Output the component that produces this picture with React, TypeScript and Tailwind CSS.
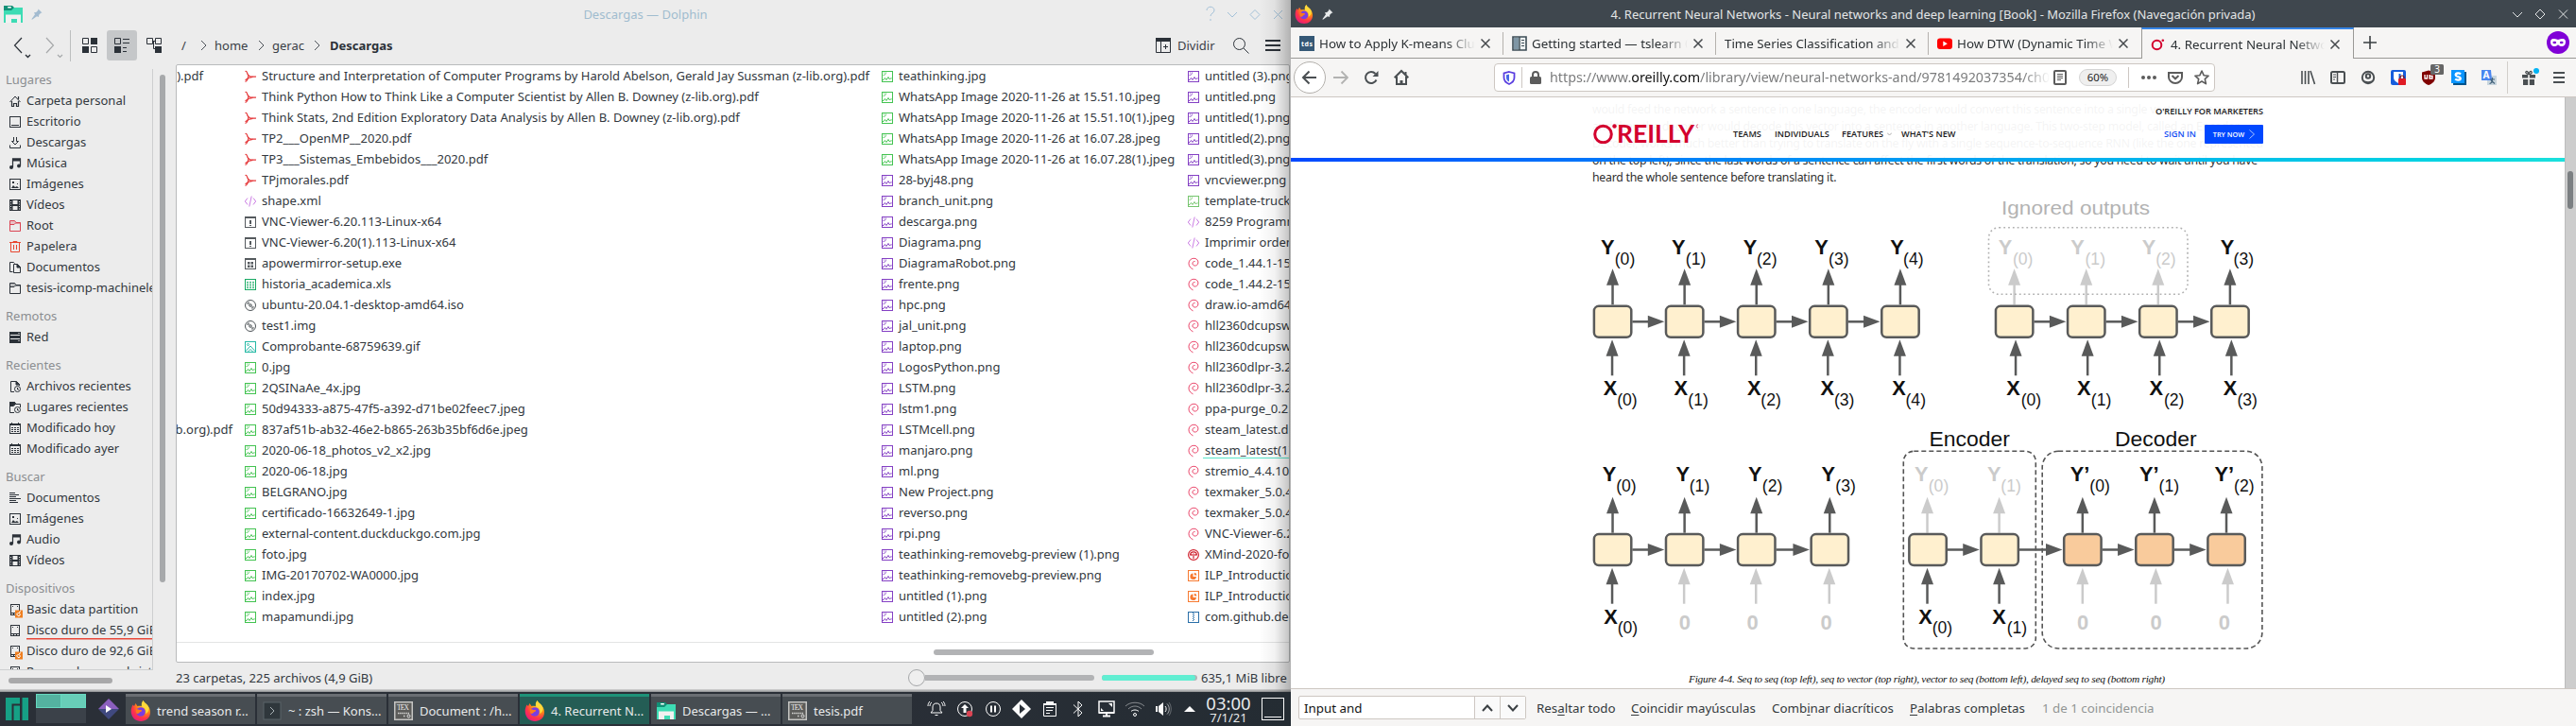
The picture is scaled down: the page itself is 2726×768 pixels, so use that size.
import React from "react";

const INK = "#2b3138";

/* ---------- small icons (16 unit grid) ---------- */
type IconName =
  | "home" | "desktop" | "download" | "music" | "image" | "video" | "folderRed" | "trash"
  | "docs" | "folder" | "network" | "recentFile" | "recentFolder" | "calendar" | "lines"
  | "diskLink" | "disk" | "pdf" | "xml" | "bin" | "exe" | "xls" | "iso" | "gif" | "jpg"
  | "png" | "svgfile" | "deb" | "redhat" | "ppt" | "zip";

function pic(color: string) {
  return (
    <g fill="none" stroke={color}>
      <rect x="2.500" y="2.500" width="11" height="11" />
      <path d="M3 11.500h1l1.500-2 1.500 2 2-3 1.500 2.500 1.500-1.500 1 1" />
      <path d="M3.500 6.500c2 0 3-1 3-3M4 4h1" opacity=".85" />
    </g>
  );
}

const folderShape = (c: string) => (
  <>
    <path d="M2.500 13.500v-11h5l1.500 2h4.500v9z" fill="none" stroke={c} />
    <path d="M3 2.500h4.500l1.500 2L7 6.500H3z" fill={c} opacity=".25" />
    <path d="M3 6.500h4l1.500-1.500H14" stroke={c} fill="none" />
  </>
);

const diskShape = (
  <g fill="none" stroke={INK}>
    <rect x="3.500" y="2.500" width="9" height="11" />
    <path d="M5 4.500h1M10 4.500h1M3.500 11.500h9M6.500 13v-1.500M9.500 13v-1.500" />
  </g>
);

const ICONS: Record<IconName, React.ReactNode> = {
  home: (
    <g fill="none" stroke={INK}>
      <path d="M2.500 9L8 3l5.500 6" />
      <path d="M4.500 8v5.500h2v-3h3v3h2V8M11.500 3v3" strokeWidth="1.200" />
    </g>
  ),
  desktop: (
    <g fill="none" stroke={INK}>
      <rect x="2.500" y="2.500" width="11" height="11" />
      <path d="M4 11.500h8" />
    </g>
  ),
  download: (
    <g fill="none" stroke={INK}>
      <path d="M6.500 2v4.500H4.500L8 10l3.500-3.500h-2V2M2.500 10.500v3h11v-3" />
    </g>
  ),
  music: (
    <g>
      <path d="M5.500 12V3h8v7.500" fill="none" stroke={INK} strokeWidth="1.200" />
      <path d="M5 2.500h9v3H5z" fill={INK} />
      <circle cx="4" cy="12" r="2" fill={INK} />
      <circle cx="12" cy="10.500" r="2" fill={INK} />
    </g>
  ),
  image: (
    <g>
      <rect x="2.500" y="2.500" width="11" height="11" fill="none" stroke={INK} />
      <path d="M4 12l2-3 2 2 2-1 2 2zM5 5h2v2H5zM10 7h1v1h-1z" fill={INK} />
    </g>
  ),
  video: (
    <g>
      <path d="M2 2h12v12H2z" fill={INK} />
      <path d="M5.500 3h5v4h-5zM5.500 9h5v4h-5z" fill="#ececec" />
      <path d="M3 4h1v1H3zM3 6.500h1v1H3zM3 9h1v1H3zM3 11.500h1v1H3zM12 4h1v1h-1zM12 6.500h1v1h-1zM12 9h1v1h-1zM12 11.500h1v1h-1z" fill="#ececec" />
    </g>
  ),
  folderRed: folderShape("#da4453"),
  folder: folderShape(INK),
  trash: (
    <g fill="none" stroke="#e8462f">
      <path d="M3.500 4v9.500h9V4M2 3.500h12M6 3V2.500h4V3M6.500 6v5M9.500 6v5" />
    </g>
  ),
  docs: (
    <g fill="none" stroke={INK}>
      <path d="M5.500 12.500h-3v-10h4l1 1" />
      <path d="M6.500 4.500h4l3 3v6h-7z" />
      <path d="M10 4.500v3.500h3.500z" fill={INK} />
    </g>
  ),
  network: (
    <g>
      <path d="M2 2h12v12H2z" fill={INK} />
      <path d="M3 5.500h10M3 9.500h10" stroke="#ececec" />
      <path d="M11 3.500h2M11 11.500h2" stroke="#ececec" strokeWidth=".6" />
    </g>
  ),
  recentFile: (
    <g fill="none" stroke={INK}>
      <path d="M7 13.500H3.500v-11h6l3 3V7" />
      <path d="M9 2.500V6h3.500z" fill={INK} />
      <circle cx="10.500" cy="10.500" r="3" />
      <path d="M10.500 9v2H12" />
    </g>
  ),
  recentFolder: (
    <g fill="none" stroke={INK}>
      <path d="M7 13.500H2.500v-11h5l1 2h5V8" />
      <path d="M2.500 2.500h5l1 2L6 6.500H2.500z" fill={INK} />
      <circle cx="10.500" cy="10.500" r="3" />
      <path d="M10.500 9v2H12" />
    </g>
  ),
  calendar: (
    <g>
      <rect x="2.500" y="3.500" width="11" height="10" fill="none" stroke={INK} />
      <path d="M2 3h12v2H2zM4 2h1v2H4zM11 2h1v2h-1z" fill={INK} />
      <path d="M4 7.500h8M4 9.500h8M4 11.500h8" stroke={INK} strokeDasharray="2 1" />
    </g>
  ),
  lines: <path d="M2 2.500h6M2 4.500h10M2 6.500h7M2 8.500h12M2 10.500h7M2 12.500h9" stroke={INK} fill="none" />,
  disk: diskShape,
  diskLink: (
    <g>
      {diskShape}
      <rect x="8" y="8.500" width="8" height="8" fill="#ef8022" />
      <path d="M9.500 13l2-2 2 2-1.500 2zM12 11l2-1.500" stroke="#fff" fill="none" />
    </g>
  ),
  pdf: (
    <g fill="none" stroke="#e5393b" strokeWidth="1.200">
      <path d="M2.500 2.500c1.500-.5 2 1 2.300 2.500.4 1.500 1.500 2.500 3.200 3 1.800.4 3.500-.3 6 .2" />
      <path d="M2.500 13.500c2-.5 3-3.500 3.500-7" />
      <path d="M2.500 12c2-2 5-3.500 8-3.700" opacity=".9" />
    </g>
  ),
  xml: (
    <path d="M5 4.500L2.300 8 5 11.500M11 4.500L13.700 8 11 11.500M9.200 2.500l-2.400 11" fill="none" stroke="#cb7de4" />
  ),
  bin: (
    <g fill="none" stroke="#555a5e">
      <rect x="2.500" y="2.500" width="11" height="11" />
      <path d="M2 3.500h12" />
      <path d="M8 6v4M8 11v1" strokeWidth="2" />
    </g>
  ),
  exe: (
    <g fill="none" stroke="#555a5e">
      <rect x="2.500" y="2.500" width="11" height="11" />
      <path d="M2 3.500h12" />
      <path d="M5 6h2.500v2.500H5zM8.500 6H11v2.500H8.500zM5 9.500h2.500V12H5zM8.500 9.500H11V12H8.500z" fill="#555a5e" stroke="none" />
    </g>
  ),
  xls: (
    <g fill="none" stroke="#18a963">
      <rect x="2.500" y="2.500" width="11" height="11" />
      <path d="M4 5.500h8M4 7.500h8M4 9.500h8M4 11.500h8" strokeDasharray="2 1" />
    </g>
  ),
  iso: (
    <g fill="none" stroke="#50565a">
      <circle cx="8" cy="8" r="5.500" />
      <circle cx="8" cy="8" r="1.300" />
      <path d="M4.500 6.500c.3-1 1-1.800 2-2.200M5.500 7c.3-.8.800-1.200 1.500-1.500M11.500 9.500c-.3 1-1 1.800-2 2.200M10.500 9c-.3.800-.8 1.200-1.500 1.500" />
    </g>
  ),
  gif: (
    <g fill="none" stroke="#26b9a5">
      <rect x="2.500" y="2.500" width="11" height="11" />
      <path d="M3 12.500l5-5.500 5 5.500" />
      <path d="M5.500 13l2.500-2.500 2.500 2.500" />
      <circle cx="5.500" cy="5.500" r="1" />
    </g>
  ),
  jpg: pic("#43c351"),
  png: pic("#8440c4"),
  svgfile: pic("#76c56e"),
  deb: (
    <path
      d="M7.500 13.800C4.500 12.500 2.800 10 3 7.200 3.300 4.300 5.500 2.300 8.300 2.300c3 0 4.800 2 4.600 4.600C12.700 9 11 10.200 9.200 10 7.600 9.800 6.700 8.500 7 7.100c.3-1.200 1.400-1.800 2.600-1.500"
      fill="none" stroke="#ea4368"
    />
  ),
  redhat: (
    <g fill="none" stroke="#d02531" strokeWidth="1.200">
      <circle cx="8" cy="8" r="5.400" />
      <path d="M4.500 8.500C4.500 6 6 4.800 8 4.800s3.500 1.200 3.500 3.700M8 6.500V12M6 7v2M10 7v2" />
    </g>
  ),
  ppt: (
    <g>
      <rect x="2.500" y="2.500" width="11" height="11" fill="none" stroke="#f77a31" />
      <path d="M7.500 5.500v3.500H11A3.300 3.300 0 1 1 7.500 5.500z" fill="#f77a31" />
      <path d="M8.800 4.800A3 3 0 0 1 11.500 7.600H8.800z" fill="#f77a31" />
    </g>
  ),
  zip: (
    <g fill="none" stroke="#2a6fa8">
      <rect x="2.500" y="2.500" width="11" height="11" />
      <path d="M7.500 3v9" strokeDasharray="1 1" />
      <path d="M8.500 4v8" strokeDasharray="1 1" />
    </g>
  ),
};

const Icon = ({ name }: { name: IconName }) => (
  <svg width="16" height="16" viewBox="0 0 16 16" className="mt-[2px] shrink-0 overflow-visible">{ICONS[name]}</svg>
);

/* ---------- data ---------- */
const PLACES: { title: string; items: [IconName, string][] }[] = [
  {
    title: "Lugares",
    items: [
      ["home", "Carpeta personal"], ["desktop", "Escritorio"], ["download", "Descargas"], ["music", "Música"],
      ["image", "Imágenes"], ["video", "Vídeos"], ["folderRed", "Root"], ["trash", "Papelera"],
      ["docs", "Documentos"], ["folder", "tesis-icomp-machinele"],
    ],
  },
  { title: "Remotos", items: [["network", "Red"]] },
  {
    title: "Recientes",
    items: [
      ["recentFile", "Archivos recientes"], ["recentFolder", "Lugares recientes"],
      ["calendar", "Modificado hoy"], ["calendar", "Modificado ayer"],
    ],
  },
  { title: "Buscar", items: [["lines", "Documentos"], ["image", "Imágenes"], ["music", "Audio"], ["video", "Vídeos"]] },
  {
    title: "Dispositivos",
    items: [
      ["diskLink", "Basic data partition"], ["disk", "Disco duro de 55,9 GiB"],
      ["diskLink", "Disco duro de 92,6 GiB"], ["disk", "Reservado para el sist"],
    ],
  },
];

const COL_A: [IconName, string][] = [
  ["pdf", "Structure and Interpretation of Computer Programs by Harold Abelson, Gerald Jay Sussman (z-lib.org).pdf"],
  ["pdf", "Think Python How to Think Like a Computer Scientist by Allen B. Downey (z-lib.org).pdf"],
  ["pdf", "Think Stats, 2nd Edition Exploratory Data Analysis by Allen B. Downey (z-lib.org).pdf"],
  ["pdf", "TP2___OpenMP__2020.pdf"],
  ["pdf", "TP3___Sistemas_Embebidos___2020.pdf"],
  ["pdf", "TPjmorales.pdf"],
  ["xml", "shape.xml"],
  ["bin", "VNC-Viewer-6.20.113-Linux-x64"],
  ["bin", "VNC-Viewer-6.20(1).113-Linux-x64"],
  ["exe", "apowermirror-setup.exe"],
  ["xls", "historia_academica.xls"],
  ["iso", "ubuntu-20.04.1-desktop-amd64.iso"],
  ["iso", "test1.img"],
  ["gif", "Comprobante-68759639.gif"],
  ["jpg", "0.jpg"],
  ["jpg", "2QSINaAe_4x.jpg"],
  ["jpg", "50d94333-a875-47f5-a392-d71be02feec7.jpeg"],
  ["jpg", "837af51b-ab32-46e2-b865-263b35bf6d6e.jpeg"],
  ["jpg", "2020-06-18_photos_v2_x2.jpg"],
  ["jpg", "2020-06-18.jpg"],
  ["jpg", "BELGRANO.jpg"],
  ["jpg", "certificado-16632649-1.jpg"],
  ["jpg", "external-content.duckduckgo.com.jpg"],
  ["jpg", "foto.jpg"],
  ["jpg", "IMG-20170702-WA0000.jpg"],
  ["jpg", "index.jpg"],
  ["jpg", "mapamundi.jpg"],
];

const COL_B: [IconName, string][] = [
  ["jpg", "teathinking.jpg"],
  ["jpg", "WhatsApp Image 2020-11-26 at 15.51.10.jpeg"],
  ["jpg", "WhatsApp Image 2020-11-26 at 15.51.10(1).jpeg"],
  ["jpg", "WhatsApp Image 2020-11-26 at 16.07.28.jpeg"],
  ["jpg", "WhatsApp Image 2020-11-26 at 16.07.28(1).jpeg"],
  ["png", "28-byj48.png"], ["png", "branch_unit.png"], ["png", "descarga.png"], ["png", "Diagrama.png"],
  ["png", "DiagramaRobot.png"], ["png", "frente.png"], ["png", "hpc.png"], ["png", "jal_unit.png"],
  ["png", "laptop.png"], ["png", "LogosPython.png"], ["png", "LSTM.png"], ["png", "lstm1.png"],
  ["png", "LSTMcell.png"], ["png", "manjaro.png"], ["png", "ml.png"], ["png", "New Project.png"],
  ["png", "reverso.png"], ["png", "rpi.png"], ["png", "teathinking-removebg-preview (1).png"],
  ["png", "teathinking-removebg-preview.png"], ["png", "untitled (1).png"], ["png", "untitled (2).png"],
];

const COL_C: [IconName, string][] = [
  ["png", "untitled (3).png"], ["png", "untitled.png"], ["png", "untitled(1).png"], ["png", "untitled(2).png"],
  ["png", "untitled(3).png"], ["png", "vncviewer.png"], ["svgfile", "template-truck"],
  ["xml", "8259 Programm"], ["xml", "Imprimir orden"], ["deb", "code_1.44.1-15"], ["deb", "code_1.44.2-15"],
  ["deb", "draw.io-amd64"], ["deb", "hll2360dcupsw"], ["deb", "hll2360dcupsw"], ["deb", "hll2360dlpr-3.2"],
  ["deb", "hll2360dlpr-3.2"], ["deb", "ppa-purge_0.2."], ["deb", "steam_latest.d"], ["deb", "steam_latest(1)"],
  ["deb", "stremio_4.4.10"], ["deb", "texmaker_5.0.4"], ["deb", "texmaker_5.0.4"], ["deb", "VNC-Viewer-6.2"],
  ["redhat", "XMind-2020-for"], ["ppt", "ILP_Introductio"], ["ppt", "ILP_Introductio"], ["zip", "com.github.de"],
];

/* ---------- shared pictures ---------- */
const Firefox = ({ size }: { size: number }) => (
  <svg width={size} height={size} viewBox="0 0 22 22" className="shrink-0">
    <defs>
      <radialGradient id="ffx" cx=".75" cy=".15" r="1">
        <stop offset="0" stopColor="#fff44f" />
        <stop offset=".4" stopColor="#ff980e" />
        <stop offset=".7" stopColor="#ff3647" />
        <stop offset="1" stopColor="#e31587" />
      </radialGradient>
    </defs>
    <path d="M2.500 4.500l1.500 1.500 1.500-3 2 3c2-.4 3-.2 4 .2L13.500 0c1 2.500 3 3 4.500 5 4 4 4 11 0 14.500-4 3.500-10.500 3-14 0C0 15.500-.2 9.500 2.500 4.500z" fill="url(#ffx)" />
    <circle cx="11" cy="12" r="4.800" fill="#7a3de0" />
    <path d="M6 9c2 .2 3 1.200 5 1 1.500 0 1.500 2-1 2.300-1 2-4 2.500-4-.3z" fill="#ff7a1a" />
    <path d="M13.500 0c-1.500 2-2.500 4-1 6.500 3 1 4.500 4 3.500 7.500 4-2 4.500-6 2-9-1.500-1.800-3.500-2.500-4.500-5z" fill="#ffd83a" />
  </svg>
);

const DolphinFolder = ({ size }: { size: number }) => (
  <svg width={size} height={size} viewBox="0 0 20 20" className="shrink-0">
    <path d="M0 1h9l2 2v4H0z" fill="#129077" />
    <path d="M0 19V6h8l3-3h9v16z" fill="#3ddcb4" />
    <path d="M2 19v-8.500h16V19h-4v-4H8v4z" fill="#f1f1f1" />
    <rect x="4" y="2" width="4" height="1.500" rx=".7" fill="#fff" />
  </svg>
);

const Pin = ({ color }: { color: string }) => (
  <svg width="12" height="12" viewBox="0 0 12 12">
    <path d="M7.500.5l4 4-1.300.3-2 2L8 9 6 8.200 1 11.800.4 11.200 4 6.200 3 4.200l2.200-.3 2-2z" fill={color} />
  </svg>
);

/* ---------- Dolphin ---------- */
const FileColumn = ({ items, width, marked }: { items: [IconName, string][]; width: string; marked?: number }) => (
  <div className={`flex shrink-0 flex-col ${width}`}>
    {items.map(([icon, name], i) => (
      <div key={i} className="flex h-[22px] items-center">
        <Icon name={icon} />
        <span className={`relative ml-1 whitespace-pre ${i === marked ? "before:absolute before:-left-0.5 before:right-0 before:bottom-0 before:h-px before:bg-[#5be6cb]" : ""}`}>{name}</span>
      </div>
    ))}
  </div>
);

const Crumb = () => (
  <svg width="7" height="12" viewBox="0 0 7 12" className="shrink-0"><path d="M1 1l5 5-5 5" fill="none" stroke="#4b5157" /></svg>
);

function Dolphin() {
  return (
    <div className="relative flex h-[732px] w-full flex-col overflow-hidden bg-[#ececec]">
      <div className="relative flex h-[29px] items-center">
        <div className="ml-[4px] flex items-center gap-[9px]">
          <DolphinFolder size={20} />
          <Pin color="#a3bbd0" />
        </div>
        <div className="flex-1 pl-[45px] text-center text-[#a0bccf]">Descargas — Dolphin</div>
        <svg width="84" height="20" viewBox="0 0 84 20" className="mr-[6px]" fill="none" stroke="#a3c1d8">
          <path d="M1 6c0-5 8-5 8 0 0 3-4 3-4 6M5 15v2" />
          <path d="M23 8l5 5 5-5M47 10.500l5-5 5 5-5 5zM72 6l9 9M81 6l-9 9" />
        </svg>
      </div>
      <div className="flex h-[39px] items-start pt-[3px]">
        <svg width="60" height="32" viewBox="0 0 60 32" className="ml-[14px] shrink-0" fill="none">
          <path d="M9 8L1.500 16 9 24" stroke={INK} strokeWidth="1.200" />
          <path d="M13 26l2.500 2.500L18 26" stroke={INK} strokeWidth="1.400" />
          <path d="M35 8l7.500 8L35 24M47 26l2.500 2.500L52 26" stroke="#a6a8aa" strokeWidth="1.200" />
        </svg>
        <div className="h-[33px] w-px bg-[#bcbebf]" />
        <div className="ml-[12px] flex h-8 w-4 items-center">
          <svg width="16" height="16"><path d="M9 0h7v7H9zM0 9h7v7H0z" fill={INK} /><path d="M.5.5h6v6h-6zM9.500 9.500h6v6h-6z" fill="none" stroke={INK} /></svg>
        </div>
        <div className="ml-[10px] flex size-8 items-center justify-center rounded-[3px] bg-[#c5c7c9]">
          <svg width="16" height="16"><path d="M0 9h7v7H0z" fill={INK} /><path d="M.5.500h6v6h-6zM9 1.500h7M9 5.500h7M9 10.500h4M9 14.500h4" fill="none" stroke={INK} /></svg>
        </div>
        <div className="ml-[10px] flex h-8 items-center">
          <svg width="16" height="16"><path d="M9 9h7v7H9z" fill={INK} /><path d="M.5.500h6v6h-6zM9.500.500h6v6h-6zM6.500 3.500h3M7.500 3.500v8H9" fill="none" stroke={INK} /></svg>
        </div>
        <div className="ml-[21px] flex h-8 flex-1 items-center text-[#3a4046]">
          <span className="w-[20px]">/</span><Crumb />
          <span className="ml-[8px] w-[46px]">home</span><Crumb />
          <span className="ml-[8px] w-[44px]">gerac</span><Crumb />
          <span className="ml-[10px] font-bold text-[#2b3138]">Descargas</span>
        </div>
        <div className="flex h-8 items-center">
          <svg width="16" height="16"><path d="M0 0h16v4H0z" fill={INK} /><path d="M.5.500h15v15H.5zM5.500 4v11M8 9.500h5M10.500 7v5" fill="none" stroke={INK} /></svg>
          <span className="ml-[7px] w-[40px] text-[#3a4046]">Dividir</span>
          <svg width="17" height="17" className="ml-[19px]"><circle cx="6.500" cy="6.500" r="6" fill="none" stroke={INK} /><path d="M11 11l5.500 5.500" stroke={INK} /></svg>
          <svg width="16" height="14" className="mr-[11px] ml-[17px]"><path d="M0 2h16M0 7h16M0 12h16" stroke={INK} strokeWidth="2" /></svg>
        </div>
      </div>
      <div className="flex h-[661px]">
        <div className="flex w-[186px] shrink-0 flex-col pt-[5px]">
          <div className="flex">
            <div className="h-[636px] w-[162px] overflow-hidden border-r border-b border-[#cdcfd0]">
              {PLACES.map((s, i) => (
                <div key={s.title} className={i ? "mt-2" : ""}>
                  <div className="flex h-[22px] items-center pl-[6px] text-[#8b8e91]">{s.title}</div>
                  {s.items.map(([icon, label]) => (
                    <div key={label} className="flex h-[22px] items-center pl-2">
                      <Icon name={icon} />
                      <span className={`ml-1 whitespace-nowrap ${label.includes("55,9") ? "shadow-[0_1.5px_0_#e8483a]" : ""}`}>{label}</span>
                    </div>
                  ))}
                </div>
              ))}
            </div>
            <div className="mt-[6px] ml-[7px] h-[537px] w-[6px] rounded-full bg-[#a7a9ab]" />
          </div>
          <div className="mt-[8px] ml-[9px] h-[6px] w-[110px] rounded-full bg-[#a9a9aa]" />
        </div>
        <div className="flex flex-1 flex-col">
          <div className="mr-px h-[633px] rounded-[2px] border border-[#b9bbbc] bg-white">
            <div className="flex h-[611px] w-[1177px] overflow-hidden border-b border-[#e3e4e4]">
              <div className="relative w-[70px] shrink-0">
                <span className="absolute top-0 right-[42px] leading-[22px] whitespace-nowrap">).pdf</span>
                <span className="absolute top-[374px] right-[11px] leading-[22px] whitespace-nowrap">b.org).pdf</span>
              </div>
              <FileColumn items={COL_A} width="w-[674px]" />
              <FileColumn items={COL_B} width="w-[324px]" />
              <FileColumn items={COL_C} width="w-[180px]" marked={18} />
            </div>
            <div className="mt-[7px] ml-[801px] h-[6px] w-[233px] rounded-full bg-[#b2b3b5]" />
          </div>
          <div className="flex h-[27px] items-center pt-[6px] pb-[1px] text-[#33393f]">
            <span className="w-[775px]">23 carpetas, 225 archivos (4,9 GiB)</span>
            <div className="flex w-[197px] items-center">
              <div className="size-[18px] shrink-0 rounded-full border border-[#a5a7a9] bg-[#efefef]" />
              <div className="h-[6px] flex-1 rounded-r-full bg-[#b2b3b5]" />
            </div>
            <div className="ml-[8px] h-[6px] w-[101px] rounded-full bg-[#b2b3b5]"><div className="h-full w-[99px] rounded-full bg-[#61eed2]" /></div>
            <span className="ml-[4px] whitespace-nowrap">635,1 MiB libre</span>
          </div>
        </div>
      </div>
      <div className="h-[3px] bg-gradient-to-b from-[#d5d5d5] to-[#8e9091]" />
      <div className="absolute top-0 right-0 h-full w-[34px] bg-gradient-to-r from-transparent via-black/5 to-black/25" />
    </div>
  );
}

/* ---------- task bar ---------- */
const Terminal = () => (
  <svg width="20" height="20"><rect x="1" y="1" width="18" height="18" fill="#2f373c" stroke="#5b6469" /><path d="M8 6l4 4-4 4" fill="none" stroke="#aab3b6" /></svg>
);
const Tex = () => (
  <svg width="20" height="20">
    <rect x=".75" y=".75" width="18.500" height="18.500" fill="#5c5c5a" stroke="#c4c4c2" strokeWidth="1.500" />
    <text x="3" y="9" fontSize="7.500" fill="#eee" fontFamily="Liberation Serif, serif" textLength="13">TEX</text>
    <path d="M4 12.500h12M10 15.500h2" stroke="#d8d8d6" strokeDasharray="1.500 .7" strokeWidth="1.500" />
    <circle cx="15.500" cy="15.500" r="1.500" fill="none" stroke="#eee" />
  </svg>
);

const TASKS: [string, React.ReactNode, boolean?][] = [
  ["trend season r...", <Firefox size={22} />],
  ["~ : zsh — Kons...", <Terminal />],
  ["Document : /h...", <Tex />],
  ["4. Recurrent N...", <Firefox size={22} />, true],
  ["Descargas — ...", <DolphinFolder size={20} />],
  ["tesis.pdf", <Tex />],
];

const TRAY: React.ReactNode[] = [
  <g key="bell"><path d="M4 14h12l-2-2.500V8c0-2.500-1.500-4-4-4S6 5.500 6 8v3.500zM8.500 16.500h3M5 3C3.500 4 3 5.500 3 7M3 2C1.500 3.500 1 5 1 7M15 3c1.500 1 2 2.500 2 4M17 2c1.500 1.500 2 3 2 5" /></g>,
  <g key="up"><circle cx="10" cy="10" r="7.500" /><path d="M10 5l-4 4h2.500v5h3V9H14z" fill="#fcfcfc" stroke="none" /><circle cx="15" cy="15" r="3.200" fill="#da4453" stroke="none" /></g>,
  <g key="pause"><circle cx="10" cy="10" r="7.500" /><path d="M8 6.500v7M12 6.500v7" strokeWidth="2" /></g>,
  <g key="play" stroke="none"><path d="M10 0l10 10-10 10L0 10z" fill="#fcfcfc" /><path d="M8 5l6 5-6 5z" fill="#2a3038" /></g>,
  <g key="clip"><path d="M3.500 4.500h13v13h-13zM6 8.500h8M6 11.500h7M6 14.500h4" /><path d="M3 4h3V2h8v2h3v2H3z" fill="#fcfcfc" stroke="none" /></g>,
  <g key="bt"><path d="M5 5.500l9 8.500-4 4V2l4 4-9 8.500" /></g>,
  <g key="mon"><path d="M2 2h16v12H2z" strokeWidth="1.500" /><path d="M6 17.500h8M10 14v3" strokeWidth="2" /><path d="M12 4h4v4zM4 9l3 3H4zM2 13h16v2H2z" fill="#fcfcfc" stroke="none" /></g>,
  <g key="wifi"><path d="M0 7c5-5 15-5 20 0M3 10c4-4 10-4 14 0" opacity=".45" /><path d="M6 12.500c2-2 6-2 8 0" /><circle cx="10" cy="16" r="1.500" /></g>,
  <g key="vol"><path d="M2 7h2v6H2zM5 7l5-4v14l-5-4z" fill="#fcfcfc" stroke="none" /><path d="M12 7c1.500 1.500 1.500 4.500 0 6" /><path d="M14 4.500c3 3 3 8 0 11" opacity=".6" /><path d="M16 3c3 4 3 10 0 14" opacity=".3" /></g>,
];

function Taskbar() {
  return (
    <div className="flex h-9 w-full items-start bg-gradient-to-r from-[#2a2f37] via-[#2a2f37] via-65% to-[#242c33] pt-[2px] text-[#e8eaeb]">
      <svg width="24" height="24" className="mt-[4px] ml-[6px] shrink-0"><path d="M0 0h15v6.500H6.500V24H0zM8.500 8.500H15V24H8.500zM17.500 0H24v24h-6.500z" fill="#16a085" /></svg>
      <div className="ml-[8px] flex h-[31px] w-[53px] shrink-0 flex-col">
        <div className="flex h-[15px] border border-[#67d9c0] bg-[#54b2a0]"><div className="ml-auto h-full w-[26px] border-l border-[#67d9c0] bg-[#68ceb8]" /></div>
        <div className="flex-1 bg-[#3b4149]" />
      </div>
      <svg width="22" height="22" viewBox="0 0 22 22" className="mt-[5px] ml-[13px] shrink-0">
        <path d="M11 0l11 11H0z" fill="#8b5fbd" /><path d="M0 11h22L11 22z" fill="#40497f" /><path d="M8 7l6 4-6 4z" fill="#fff" />
      </svg>
      <div className="ml-[7px] flex shrink-0 gap-[2px]">
        {TASKS.map(([label, icon, active], i) => (
          <div key={i} className={`flex h-8 w-[137px] items-center border-t-[3px] ${active ? "border-[#1d9278] bg-[#245d55]" : "border-[#6a6e73] bg-[#474d52]"}`}>
            <span className="ml-[5px] flex w-[22px] justify-center">{icon}</span>
            <span className="ml-[6px] whitespace-nowrap">{label}</span>
          </div>
        ))}
      </div>
      <div className="mt-[6px] ml-[16px] flex shrink-0 gap-[10px]">
        {TRAY.map((g, i) => (
          <svg key={i} width="20" height="20" viewBox="0 0 20 20" fill="none" stroke="#fcfcfc">{g}</svg>
        ))}
      </div>
      <svg width="12" height="6" className="mt-[13px] ml-[12px] shrink-0"><path d="M0 6l6-6 6 6z" fill="#fcfcfc" /></svg>
      <div className="ml-[9px] flex w-[52px] shrink-0 flex-col items-center">
        <span className="h-[17px] text-[18.500px] leading-[19px]">03:00</span>
        <span className="text-[13px] leading-[16px]">7/1/21</span>
      </div>
      <div className="mt-[4px] ml-[9px] flex size-6 shrink-0 items-end justify-center border border-[#fcfcfc] pb-[2px]"><div className="h-px w-[18px] bg-[#fcfcfc]" /></div>
    </div>
  );
}

/* ---------- Firefox ---------- */
const X = () => <svg width="10" height="10" className="shrink-0"><path d="M.5.500l9 9M9.500.500l-9 9" stroke="#45494c" strokeWidth="1.500" /></svg>;

const TABS: { label: string; icon: React.ReactNode; active?: boolean }[] = [
  {
    label: "How to Apply K-means Clustering",
    icon: <svg width="16" height="16"><path d="M0 0h16v16H0z" fill="#355876" /><text x="2" y="10.500" fontSize="7" fontWeight="700" fill="#fff" fontFamily="Noto Sans, sans-serif" textLength="12">tds</text></svg>,
  },
  {
    label: "Getting started — tslearn 0.4.1",
    icon: <svg width="16" height="16"><path d="M1 1h14v14H1z" fill="#eef2f3" stroke="#3c4c55" strokeWidth="1.600" /><path d="M2 2h5v12H2z" fill="#7f96a5" /><path d="M8 1v14" stroke="#3c4c55" strokeWidth="1.500" /><path d="M10 4.500h3M10 7.500h3M10 10.500h3" stroke="#3c4c55" /></svg>,
  },
  { label: "Time Series Classification and Clustering", icon: null },
  {
    label: "How DTW (Dynamic Time Warping)",
    icon: <svg width="16" height="16"><rect y="2.500" width="16" height="11.500" rx="3" fill="#f00" /><path d="M6.300 5.500l4.500 2.700-4.500 2.700z" fill="#fff" /></svg>,
  },
  {
    label: "4. Recurrent Neural Networks",
    active: true,
    icon: <svg width="16" height="16"><circle cx="6.500" cy="8.500" r="4.800" fill="none" stroke="#d3002d" strokeWidth="2" /><circle cx="12.800" cy="3.800" r="1.300" fill="#d3002d" /></svg>,
  },
];

function TabStrip() {
  return (
    <div className="flex h-[33px] bg-[#f6f5f4]">
      {TABS.map((t) => (
        <div
          key={t.label}
          className={`relative flex w-[225px] shrink-0 items-center pr-[14px] pl-[9px] ${t.active ? "border-x border-t-2 border-x-[#9a9996] border-t-[#3584e4]" : "border-b border-[#9a9996] pt-px"}`}
        >
          {t.icon && <span className="mr-[5px]">{t.icon}</span>}
          <div className="h-5 flex-1 overflow-hidden text-[13.330px] leading-5 whitespace-nowrap text-[#2c3134] [mask-image:linear-gradient(to_left,transparent,#000_30px)]">{t.label}</div>
          <span className="ml-[6px] flex"><X /></span>
          {!t.active && t.label !== TABS[3].label && <span className="absolute top-[5px] right-0 h-6 w-px bg-[#b5b2ae]" />}
        </div>
      ))}
      <div className="flex flex-1 items-center justify-between border-b border-[#9a9996] pr-[7px] pl-[10px]">
        <svg width="14" height="14"><path d="M7 0v14M0 7h14" stroke="#3b4043" strokeWidth="1.600" /></svg>
        <svg width="24" height="24">
          <circle cx="12" cy="12" r="12" fill="#8000d7" />
          <path d="M4 11c0-2.500 2-3 4-3s3 1 4 1 2-1 4-1 4 .5 4 3-1 5-4 5-3-1.500-4-1.500S11 16 8 16s-4-2.500-4-5z" fill="#fff" />
          <ellipse cx="8.300" cy="12" rx="1.900" ry="1.300" fill="#8000d7" /><ellipse cx="15.700" cy="12" rx="1.900" ry="1.300" fill="#8000d7" />
        </svg>
      </div>
    </div>
  );
}

const NI = ({ children }: { children: React.ReactNode }) => (
  <svg width="16" height="16" viewBox="0 0 16 16" fill="none" stroke="#4a4f52" strokeWidth="2" className="shrink-0 overflow-visible">{children}</svg>
);

function NavBar() {
  return (
    <div className="flex h-[41px] items-center border-b border-[#cdc7c2] bg-[#f6f5f4]">
      <div className="ml-[3px] flex size-[34px] shrink-0 items-center justify-center rounded-full border border-[#b3b0ac] bg-white">
        <NI><path d="M15 8H1M7.500 1.500L1 8l6.500 6.500" /></NI>
      </div>
      <div className="ml-[8px] flex items-center gap-4">
        <svg width="16" height="16" fill="none" stroke="#b2b2b1" strokeWidth="1.800"><path d="M0 8h15M8.500 1.500L15 8l-6.500 6.500" /></svg>
        <NI><path d="M13.500 10.500A6 6 0 1 1 12.500 4" /><path d="M15.500 1v6h-6z" fill="#4a4f52" stroke="none" /></NI>
        <NI><path d="M.7 8.200L8 1l7.300 7.200" /><path d="M3 7v8h10V7" /><path d="M8 15v-4" strokeWidth="3" /><path d="M12.500 2v3" /></NI>
      </div>
      <div className="ml-[90px] flex h-[30px] w-[763px] shrink-0 items-center rounded-[4px] border border-[#cdc7c2] bg-white">
        <svg width="14" height="15" viewBox="0 0 14 15" className="ml-[8px]"><path d="M7 1l5.500 1.500V7c0 3.500-2 5.500-5.500 7C3.500 12.500 1.500 10.500 1.500 7V2.500z" fill="none" stroke="#5b3fe0" strokeWidth="1.800" /><path d="M7 3.500v8C5 10.500 4 9 4 7V4.200z" fill="#4668e6" /></svg>
        <div className="ml-[6px] h-[22px] w-px bg-[#cdc7c2]" />
        <svg width="12" height="14" className="ml-[8px]"><rect y="6" width="12" height="8" rx="1.500" fill="#5c5c5c" /><path d="M3 7V4a3 3 0 0 1 6 0v3" fill="none" stroke="#5c5c5c" strokeWidth="2" /></svg>
        <div className="ml-[9px] w-[529px] overflow-hidden text-[14.300px] leading-6 whitespace-nowrap text-[#7b7c7d] [mask-image:linear-gradient(to_left,transparent,#000_28px)]">
          https://www.<span className="text-[#111]">oreilly.com</span>/library/view/neural-networks-and/9781492037354/ch04.html
        </div>
        <svg width="14" height="16" className="ml-[4px]" fill="none" stroke="#5b5b5b"><rect x="1" y="1" width="12" height="14" rx="1" strokeWidth="2" /><path d="M4 4.500h6M4 6.500h6M4 8.500h6M4 10.500h4" /></svg>
        <div className="ml-[13px] flex h-[18px] w-10 items-center justify-center rounded-full border border-[#d4d4d4] bg-[#efefef] text-[11.3px] text-[#222]">60%</div>
        <div className="ml-[12px] h-[22px] w-px bg-[#cdc7c2]" />
        <svg width="16" height="4" className="ml-[13px]" fill="#5b5b5b"><circle cx="2" cy="2" r="2" /><circle cx="8" cy="2" r="2" /><circle cx="14" cy="2" r="2" /></svg>
        <svg width="16" height="14" className="ml-[12px]" fill="none" stroke="#5b5b5b" strokeWidth="2"><path d="M1 2h14v4.500a7 6.500 0 0 1-14 0zM4.500 5L8 8.300 11.500 5" /></svg>
        <svg width="16" height="16" className="ml-[12px]" fill="none" stroke="#5b5b5b" strokeWidth="1.600" strokeLinejoin="round"><path d="M8 1l2.100 4.700 5 .5-3.800 3.400 1.100 5L8 12l-4.400 2.600 1.100-5L.9 6.200l5-.5z" /></svg>
      </div>
      <div className="ml-[90px] flex items-center gap-4">
        <NI><path d="M2 1v14M5.500 1v14M9 1v14M11 1l4.500 14" strokeWidth="1.600" /></NI>
        <NI><rect x="1" y="2" width="14" height="12" rx="1.500" /><path d="M7.500 2v12" strokeWidth="1.500" /><path d="M3 5h3M3 7.500h3M3 10h2" strokeWidth="1" /></NI>
        <NI><circle cx="8" cy="8" r="6.200" /><circle cx="8" cy="6.500" r="2.200" /><path d="M3 11c3 1.500 7 1.500 10 0l-2 2.500-3 1-3-1z" fill="#4a4f52" stroke="none" /></NI>
        <NI><rect x="0" y="0" width="16" height="16" rx="2" fill="#175ddc" stroke="none" /><path d="M3 2h10v6c0 3-2 4.500-5 6-3-1.500-5-3-5-6z" fill="#fff" stroke="none" /><path d="M8.500 4v7.500l2-1.500V4z" fill="#175ddc" stroke="none" /><rect x="8" y="9" width="8" height="7" rx="1" fill="#e01b24" stroke="none" /><path d="M10 9V8a2 2 0 0 1 4 0v1" stroke="#7d1015" strokeWidth="1.200" /></NI>
        <NI>
          <path d="M8 .5l7 2V8c0 4-3 6.500-7 8-4-1.500-7-4-7-8V2.500z" fill="#800000" stroke="none" />
          <path d="M4 5v4h2.500V5M9 5v4h3V6.500H9" stroke="#fff" strokeWidth="1.300" />
          <rect x="10" y="-6" width="14" height="11" rx="1.500" fill="#666" stroke="none" />
          <text x="14.200" y="3" fontSize="10" fill="#fff" stroke="none" fontFamily="Noto Sans, sans-serif">3</text>
        </NI>
        <NI><path d="M2 2h14v14H2z" fill="#00548c" stroke="none" /><path d="M0 0h14v14H0z" fill="#0a95ff" stroke="none" /><path d="M10 4.500C8.500 3 4.500 3 4.700 5.500c.2 2 4.800 1 5 3.200.1 2.300-4 2.300-5.500.8" stroke="#fff" strokeWidth="2.300" /></NI>
        <NI><path d="M6 6h10v10H6z" fill="#c9d6de" stroke="none" /><path d="M0 0h10l1 11H0z" fill="#4a87f0" stroke="none" /><text x="1.500" y="9" fontSize="10" fontWeight="700" fill="#fff" stroke="none" fontFamily="Noto Sans, sans-serif">A</text><path d="M9 10h5M11.500 8v2c0 2-1 4-3 4.500M10 11l4 3.500" stroke="#44637b" strokeWidth="1.200" /></NI>
      </div>
      <div className="ml-[11px] h-[34px] w-px bg-[#d2cfcb]" />
      <div className="ml-[14px] flex items-center gap-4">
        <NI>
          <path d="M1 5h6.200v3.500H1zM8.800 5H15v3.500H8.800zM2 10h5.200v6H2zM8.800 10H14v6H8.800z" fill="#4a4f52" stroke="none" />
          <path d="M8 4.500C6 4.500 4 3 5 1.800S8 2.500 8 4.500c0-2 2-4 3-2.700S10 4.500 8 4.500z" strokeWidth="1.300" />
          <circle cx="16" cy="1" r="3" fill="#00b3f4" stroke="none" />
        </NI>
        <NI><path d="M2 3h12M2 8h12M2 13h12" /></NI>
      </div>
    </div>
  );
}

/* ---------- RNN figure ---------- */
const DARK = "#595a5a";
const PALE = "#cbcbcb";
const K = 1568 / 760;
const gx = (n: number) => 1660 + n / K;

const Cell = ({ x, y, fill = "#fff0cf" }: { x: number; y: number; fill?: string }) => (
  <rect x={gx(x) + 1.2} y={y} width="39.400" height="33" rx="5" fill={fill} stroke={DARK} strokeWidth="2.500" />
);
const Up = ({ x, tip, c = DARK }: { x: number; tip: number; c?: string }) => (
  <g>
    <path d={`M${gx(x)} ${tip + 38}V${tip + 16}`} stroke={c} strokeWidth="2.500" />
    <path d={`M${gx(x)} ${tip}l6.500 17.500h-13z`} fill={c} />
  </g>
);
const Right = ({ from, to, y }: { from: number; to: number; y: number }) => (
  <g>
    <path d={`M${gx(from)} ${y}H${gx(to) - 16}`} stroke={DARK} strokeWidth="2.500" />
    <path d={`M${gx(to) - 0.5} ${y}l-17.500-6.500v13z`} fill={DARK} />
  </g>
);
const Label = ({ t, n, x, s, y, sy, c = "#111" }: { t: string; n: number; x: number; s: number; y: number; sy: number; c?: string }) => (
  <g fill={c}>
    <text x={gx(x)} y={y} fontSize="21.800" fontWeight="700">{t}</text>
    <text x={gx(s) - 0.7} y={sy} fontSize="17.600">{`(${n})`}</text>
  </g>
);

function Figure() {
  const lefts = [53, 210, 367, 524, 681];
  const yl = [70, 225, 381, 537, 702], ys = [102, 257, 412, 569, 732];
  const xl = [76, 230, 390, 550, 706], xs = [107, 262, 421, 581, 737];
  const r = [930, 1087, 1244, 1401];
  const ryl = [938, 1096, 1252, 1423], rys = [971, 1129, 1283, 1453];
  const rxl = [956, 1110, 1268, 1429], rxs = [989, 1142, 1301, 1461];
  const b = [53, 210, 367, 527];
  const byl = [74, 234, 392, 552], bys = [105, 265, 424, 584];
  const zeros = [243, 391, 552, 1112, 1272, 1421];
  return (
    <svg width="740" height="500" viewBox="1670 200 740 500" fontFamily="Liberation Sans, Arial, sans-serif" fill="none" className="block">
      {lefts.map((l, i) => (
        <g key={l}>
          <Up x={l + 43} tip={284.300} /><Up x={l + 42} tip={359.300} />
          {i < 4 && <Right from={l + 86} to={l + 157} y={340.300} />}
          <Cell x={l} y={323.800} />
          <Label t="Y" n={i} x={yl[i]} s={ys[i]} y={269} sy={280.300} />
          <Label t="X" n={i} x={xl[i]} s={xs[i]} y={418.300} sy={428.500} />
        </g>
      ))}
      {r.map((l, i) => (
        <g key={l}>
          <Up x={l + 43} tip={284.300} c={i < 3 ? PALE : DARK} /><Up x={l + 46} tip={359.300} />
          {i < 3 && <Right from={l + 86} to={l + 157} y={340.300} />}
          <Cell x={l} y={323.800} />
          <Label t="Y" n={i} x={ryl[i]} s={rys[i]} y={269} sy={280.300} c={i < 3 ? PALE : "#111"} />
          <Label t="X" n={i} x={rxl[i]} s={rxs[i]} y={418.300} sy={428.500} />
        </g>
      ))}
      <text x={gx(945)} y="227.300" fontSize="20.800" fill="#b3b3b3" textLength="157" lengthAdjust="spacingAndGlyphs">Ignored outputs</text>
      <rect x="2104.500" y="240.700" width="210.500" height="70.600" rx="11" stroke="#b0b0b0" strokeWidth="1.600" strokeDasharray="1.800 3" />
      {b.map((l, i) => (
        <g key={l}>
          <Up x={l + 43} tip={525.700} /><Up x={l + 42} tip={600.700} c={i ? PALE : DARK} />
          {i < 3 && <Right from={l + 86} to={b[i + 1]} y={581.500} />}
          <Cell x={l} y={565.100} />
          <Label t="Y" n={i} x={byl[i]} s={bys[i]} y={509.300} sy={520.300} />
        </g>
      ))}
      <Label t="X" n={0} x={77} s={108} y={659.700} sy={670} />
      {zeros.map((z) => <text key={z} x={gx(z) - 1} y="666" fontSize="22" fontWeight="700" fill={PALE}>0</text>)}
      <rect x="2014.300" y="477.300" width="140" height="208.700" rx="11" stroke="#555" strokeWidth="1.600" strokeDasharray="5 3" />
      <rect x="2161.200" y="477.300" width="232.700" height="208.700" rx="17" stroke="#555" strokeWidth="1.600" strokeDasharray="5 3" />
      <text x="2041.500" y="471.700" fontSize="21.500" fill="#111" textLength="85.500" lengthAdjust="spacingAndGlyphs">Encoder</text>
      <text x="2238" y="471.700" fontSize="21.500" fill="#111" textLength="86.500" lengthAdjust="spacingAndGlyphs">Decoder</text>
      {[741, 898].map((l, i) => (
        <g key={l}>
          <Up x={l + 42} tip={525.700} c={PALE} /><Up x={l + 42} tip={600.700} />
          <Right from={l + 86} to={i ? 1079 : 898} y={581.500} />
          <Cell x={l} y={565.100} />
          <Label t="Y" n={i} x={[755, 914][i]} s={[787, 945][i]} y={509.300} sy={520.300} c={PALE} />
          <Label t="X" n={i} x={[764, 925][i]} s={[795, 958][i]} y={659.700} sy={670} />
        </g>
      ))}
      {[1079, 1236, 1393].map((l, i) => (
        <g key={l}>
          <Up x={l + 43} tip={525.700} /><Up x={[1122, 1282, 1439][i]} tip={600.700} c={PALE} />
          {i < 2 && <Right from={l + 86} to={l + 157} y={581.500} />}
          <Cell x={l} y={565.100} fill="#f9cb9c" />
          <Label t="Y’" n={i} x={[1095, 1246, 1410][i]} s={[1139, 1290, 1454][i]} y={509.300} sy={520.300} />
        </g>
      ))}
    </svg>
  );
}

const PARAGRAPH = [
  "would feed the network a sentence in one language, the encoder would convert this sentence into a single vector representation,",
  "and then the decoder would decode this vector into a sentence in another language. This two-step model, called an Encoder–",
  "Decoder, works much better than trying to translate on the fly with a single sequence-to-sequence RNN (like the one represented",
  "on the top left), since the last words of a sentence can affect the first words of the translation, so you need to wait until you have",
  "heard the whole sentence before translating it.",
];

function Page() {
  return (
    <div className="flex h-[625px] overflow-hidden bg-white">
      <div className="relative h-full w-[1348px] overflow-hidden">
        <div className="pt-1 pl-[319px] font-['Noto_Sans',sans-serif] text-[12.300px] leading-[18px] tracking-[-0.260px] text-[#2e2e2e]">
          {PARAGRAPH.map((l) => <div key={l} className="whitespace-nowrap">{l}</div>)}
        </div>
        <div className="mt-[3px] ml-[304px]"><Figure /></div>
        <div className="mt-[11px] ml-[421px] font-['Liberation_Serif',serif] text-[11.400px] leading-[14px] tracking-[-0.260px] whitespace-nowrap text-[#111] italic">
          Figure 4-4. Seq to seq (top left), seq to vector (top right), vector to seq (bottom left), delayed seq to seq (bottom right)
        </div>
        <div className="absolute inset-x-0 top-0 h-[68px]">
          <div className="flex h-16 bg-white/95 font-['Open_Sans',sans-serif] text-[9.200px] font-semibold text-[#1c1c1c]">
            <svg width="112" height="22" viewBox="0 0 112 22" className="mt-[27px] ml-[319px] shrink-0">
              <circle cx="11.500" cy="12" r="8.800" fill="none" stroke="#d3002d" strokeWidth="3" />
              <circle cx="23.500" cy="3.500" r="2.200" fill="#d3002d" />
              <text x="26" y="21" fontFamily="Lato, sans-serif" fontWeight="700" fontSize="26" fill="#d3002d" textLength="82" lengthAdjust="spacingAndGlyphs">REILLY</text>
              <circle cx="112" cy="3.500" r="1.700" fill="none" stroke="#e36c86" />
            </svg>
            <div className="mt-[33px] ml-[37px] flex h-3 flex-1 items-center whitespace-nowrap">
              <span className="w-[44px]">TEAMS</span>
              <span className="w-[71px]">INDIVIDUALS</span>
              <span className="w-[48px]">FEATURES</span>
              <svg width="5" height="4" className="mr-[10px]"><path d="M0 .5l2.500 2.500L5 .5" fill="none" stroke="#aaa" /></svg>
              <span>WHAT'S NEW</span>
            </div>
            <div className="mr-[319px] flex flex-col items-end">
              <span className="mt-[9px] h-3 leading-3">O'REILLY FOR MARKETERS</span>
              <div className="mt-[8px] flex items-center">
                <span className="mr-[9px] text-[#1551f3]">SIGN IN</span>
                <div className="flex h-5 w-[62px] items-center justify-center gap-[5px] rounded-[1px] bg-[#0048ff] text-[7.300px] text-white">
                  TRY NOW
                  <svg width="6" height="10"><path d="M.5.500L5.500 5l-5 4.500" fill="none" stroke="#cfe0ff" strokeWidth=".8" /></svg>
                </div>
              </div>
            </div>
          </div>
          <div className="h-1 bg-gradient-to-r from-[#0048ff] to-[#1ce0dc]" />
        </div>
      </div>
      <div className="h-full w-3 border-l border-[#bdbdbd] bg-[#cdcdcd] pt-[78px] pl-[2px]"><div className="h-10 w-[6px] rounded-full bg-[#7b7f82]" /></div>
    </div>
  );
}

function FindBar() {
  return (
    <div className="flex h-10 items-center border-t border-[#cdc7c2] bg-[#f6f5f4] text-[13.330px] text-[#34393c]">
      <div className="ml-[8px] flex h-[25px] w-[241px] shrink-0 items-stretch rounded-[2px] border border-[#cdc7c2] bg-white">
        <div className="flex flex-1 items-center pl-[5px] text-[#111]">Input and</div>
        <div className="flex w-[27px] items-center justify-center border-l border-[#cdc7c2] bg-[#fafafa]"><svg width="12" height="8"><path d="M1 7l5-5.500L11 7" fill="none" stroke="#3b4043" strokeWidth="2" /></svg></div>
        <div className="flex w-[27px] items-center justify-center border-l border-[#cdc7c2] bg-[#fafafa]"><svg width="12" height="8"><path d="M1 1l5 5.500L11 1" fill="none" stroke="#3b4043" strokeWidth="2" /></svg></div>
      </div>
      <div className="ml-[11px] flex whitespace-nowrap">
        <span className="w-[100px]">Res<u className="underline-offset-2">a</u>ltar todo</span>
        <span className="w-[149px]"><u className="underline-offset-2">C</u>oincidir mayúsculas</span>
        <span className="w-[146px]">Comb<u className="underline-offset-2">i</u>nar diacríticos</span>
        <span className="w-[140px]"><u className="underline-offset-2">P</u>alabras completas</span>
        <span className="text-[#929595]">1 de 1 coincidencia</span>
      </div>
    </div>
  );
}

export default function App() {
  return (
    <div className="flex h-[768px] w-[2726px] overflow-hidden bg-[#ececec] font-['Noto_Sans',sans-serif] text-[13px] leading-[18px] text-[#32383e]">
      <div className="flex w-[1366px] shrink-0 flex-col">
        <Dolphin />
        <Taskbar />
      </div>
      <div className="flex w-[1360px] shrink-0 flex-col">
        <div className="flex h-[29px] items-center bg-[#3f474e] text-[#e3e5e6]">
          <div className="ml-[4px] flex items-center gap-[9px]"><Firefox size={20} /><Pin color="#e8eaeb" /></div>
          <div className="flex-1 pl-[22px] text-center">4. Recurrent Neural Networks - Neural networks and deep learning [Book] - Mozilla Firefox (Navegación privada)</div>
          <svg width="60" height="20" className="mr-[8px]" fill="none" stroke="#e3e5e6"><path d="M1 8l5 5 5-5M25 10l5-5 5 5-5 5zM50 5.500l9 9M59 5.500l-9 9" /></svg>
        </div>
        <TabStrip />
        <NavBar />
        <Page />
        <FindBar />
      </div>
    </div>
  );
}
